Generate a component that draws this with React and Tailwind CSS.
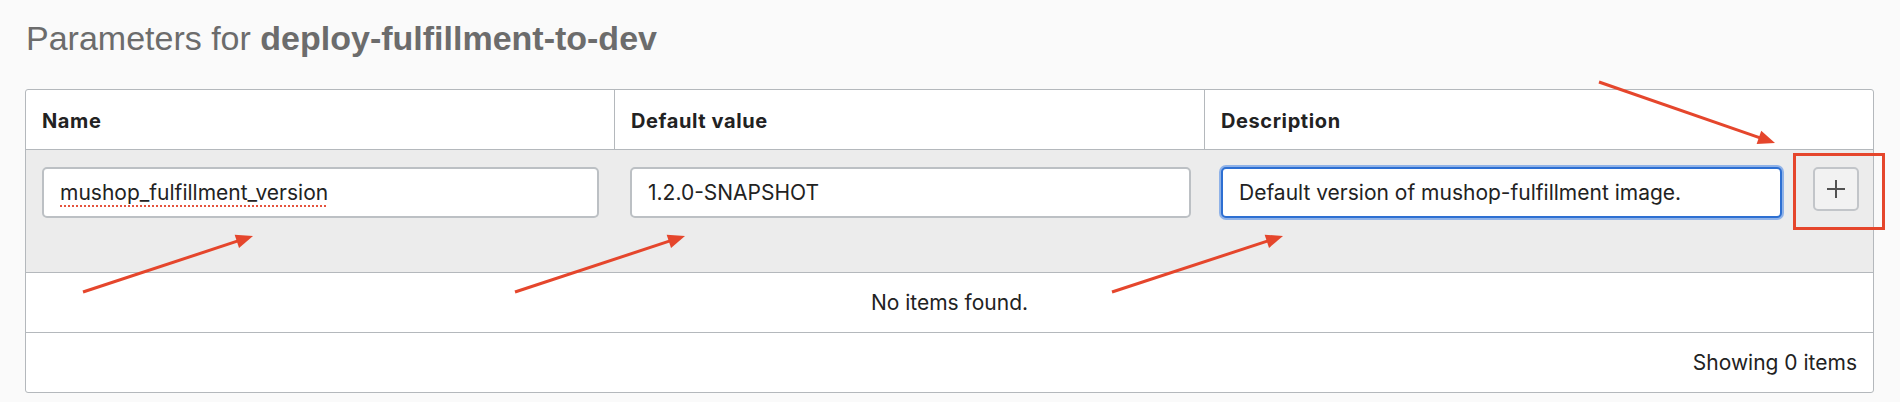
import React from 'react'

const arrows = [
  [83, 292, 253, 236],
  [515, 292, 685, 236],
  [1112, 292, 1283, 236],
  [1599, 82, 1775, 143],
]

const Arrow = ({ x1, y1, x2, y2 }) => {
  const dx = x2 - x1
  const dy = y2 - y1
  const len = Math.sqrt(dx * dx + dy * dy)
  const ux = dx / len
  const uy = dy / len
  const head = 17
  const half = 7
  const bx = x2 - ux * head
  const by = y2 - uy * head
  const pts = `${x2},${y2} ${bx - uy * half},${by + ux * half} ${bx + uy * half},${by - ux * half}`
  return (
    <g>
      <line x1={x1} y1={y1} x2={bx + ux * 2} y2={by + uy * 2} stroke="#e5462c" strokeWidth="3" />
      <polygon points={pts} fill="#e5462c" />
    </g>
  )
}

const Field = ({ children, width, focused, className = '' }) => (
  <div
    className={`flex h-[51px] items-center rounded-[5px] bg-white px-4 text-[21px] text-[#222] ${width} ${
      focused
        ? 'border-2 border-[#2d6fd2] ring-2 ring-[#8fb2e8]'
        : 'border-2 border-[#bcc0c4]'
    } ${className}`}
  >
    {children}
  </div>
)

const App = () => {
  return (
    <div className="relative min-h-[402px] bg-[#fafafa] pl-[25px] pr-[26px] pt-[21px] font-['Inter',sans-serif]">
      <h1 className="pl-[1px] font-['Liberation_Sans',Arial,sans-serif] text-[34px] leading-none text-[#6c6c6c]">
        Parameters for <span className="font-bold">deploy-fulfillment-to-dev</span>
      </h1>

      <div className="mt-[34px] rounded-[3px] border border-[#b4b8bc] bg-white">
        {/* header */}
        <div className="flex h-[60px] border-b border-[#b4b8bc] text-[20px] font-bold tracking-[0.03em] text-[#222]">
          <div className="flex w-[589px] items-center border-r border-[#b4b8bc] pl-4 pt-[3px]">Name</div>
          <div className="flex w-[590px] items-center border-r border-[#b4b8bc] pl-4 pt-[3px]">Default value</div>
          <div className="flex flex-1 items-center pl-4 pt-[3px]">Description</div>
        </div>

        {/* edit row */}
        <div className="flex h-[123px] items-start border-b border-[#b4b8bc] bg-[#ececec] pl-4 pt-[17px]">
          <Field width="w-[557px]">
            <span className="underline decoration-[#e5533d] decoration-dotted decoration-2 underline-offset-[6px]">
              mushop_fulfillment_version
            </span>
          </Field>
          <Field width="w-[561px]" className="ml-[31px]">1.2.0-SNAPSHOT</Field>
          <Field width="w-[561px]" className="ml-[30px]" focused>
            Default version of mushop-fulfillment image.
          </Field>
          <button className="ml-[31px] flex h-[44px] w-[46px] items-center justify-center rounded-[5px] border-2 border-[#c2c5c9] bg-[#f2f2f2]">
            <svg width="18" height="18" viewBox="0 0 18 18">
              <path d="M9 0v18M0 9h18" stroke="#525252" strokeWidth="2" />
            </svg>
          </button>
        </div>

        {/* empty state */}
        <div className="flex h-[60px] items-center justify-center border-b border-[#b4b8bc] text-[21px] text-[#222]">
          No items found.
        </div>

        {/* footer */}
        <div className="flex h-[59px] items-center justify-end pr-4 text-[21px] text-[#222]">
          Showing 0 items
        </div>
      </div>

      {/* annotations */}
      <svg className="pointer-events-none absolute left-0 top-0" width="1900" height="402">
        <rect x="1794.5" y="154.5" width="89" height="74" fill="none" stroke="#e5462c" strokeWidth="3" />
        {arrows.map(([x1, y1, x2, y2], i) => (
          <Arrow key={i} x1={x1} y1={y1} x2={x2} y2={y2} />
        ))}
      </svg>
    </div>
  )
}

export default App
